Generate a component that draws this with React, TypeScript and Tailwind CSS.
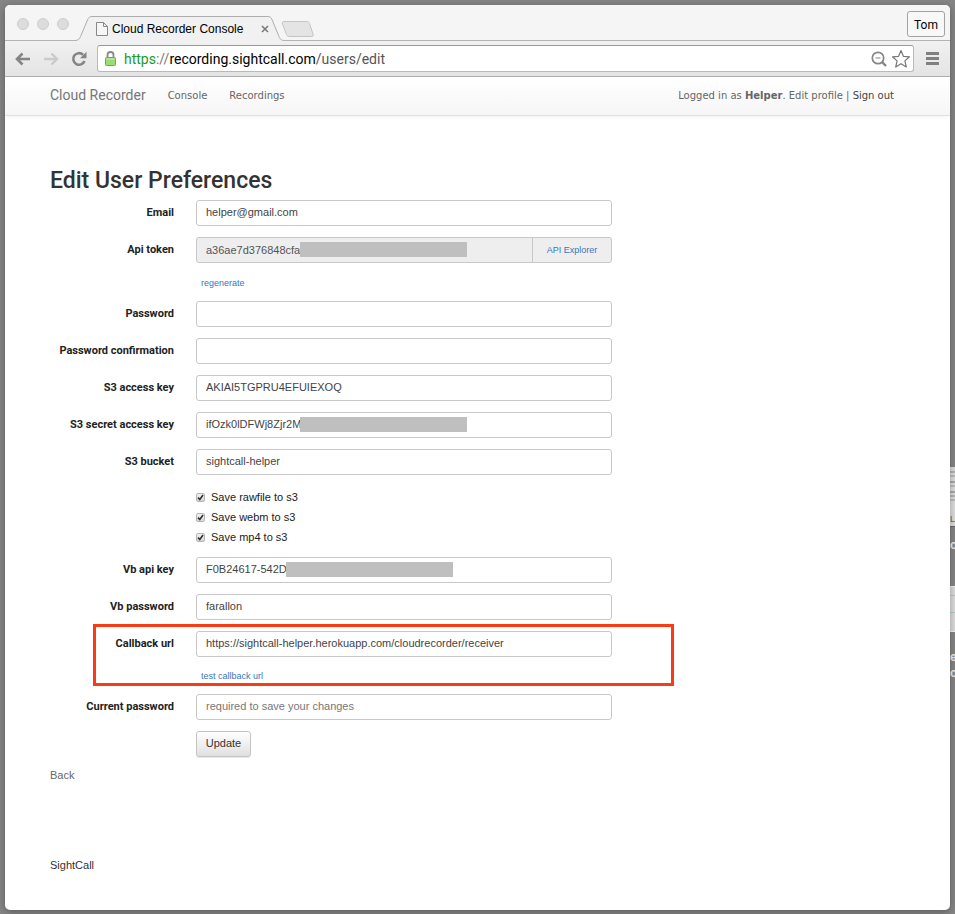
import type { ReactNode } from "react";

const field =
  "block h-[26px] w-full rounded-[3px] border border-[#c8c8c8] bg-white px-[9px] pb-[2px] text-[11px] text-[#444] outline-none placeholder:text-[#777]";

type RowProps = {
  id: string;
  label: string;
  type?: string;
  value?: string;
  placeholder?: string;
  mask?: ReactNode;
  children?: ReactNode;
};

function Row({ id, label, type = "text", value = "", placeholder, mask, children }: RowProps) {
  return (
    <div className="grid grid-cols-[124px_minmax(0,416px)] gap-x-[22px]">
      <label
        htmlFor={id}
        className="pt-[5px] text-right font-[Roboto,'Liberation_Sans',sans-serif] text-[11px] leading-4 font-bold whitespace-nowrap text-[#222]"
      >
        {label}
      </label>
      <div className="relative min-w-0">
        {children ?? <input id={id} type={type} defaultValue={value} placeholder={placeholder} className={field} />}
        {mask}
      </div>
    </div>
  );
}

function SmallLink({ children }: { children: ReactNode }) {
  return (
    <div className="pl-[151px] text-[9px] leading-3 text-[#3b76bd]">
      <a href="#">{children}</a>
    </div>
  );
}

function Check({ id, label }: { id: string; label: string }) {
  return (
    <div className="flex h-5 items-center gap-[6px] text-[11px] text-[#222]">
      <span className="relative block size-[9px]">
        <input
          id={id}
          type="checkbox"
          defaultChecked
          className="peer block size-[9px] appearance-none rounded-[2px] border border-[#b5b5b5] bg-linear-to-b from-[#f2f2f2] to-[#d8d8d8]"
        />
        <svg viewBox="0 0 9 9" className="pointer-events-none absolute inset-0 hidden size-[9px] peer-checked:block">
          <path d="M2 4.6 3.8 6.5 7 2" fill="none" stroke="#333" strokeWidth="1.6" />
        </svg>
      </span>
      <label htmlFor={id}>{label}</label>
    </div>
  );
}

function TitleBar() {
  return (
    <div className="relative flex h-9 items-end bg-[#f5f5f5] pr-[5px] pl-3">
      <div className="absolute inset-x-0 bottom-0 h-px bg-[#b3b3b3]" />
      <div className="flex gap-2 self-start pt-[13px]">
        <span className="size-3 rounded-full border border-[#cecece] bg-[#dcdcdc]" />
        <span className="size-3 rounded-full border border-[#cecece] bg-[#dcdcdc]" />
        <span className="size-3 rounded-full border border-[#cecece] bg-[#dcdcdc]" />
      </div>
      <div className="relative ml-1.5 flex h-[25px] w-[212px] items-center pr-[18px] pl-[21px]">
        <svg viewBox="0 0 212 25" className="absolute inset-0 h-[25px] w-[212px]">
          <path
            d="M0 24.500C3 24.500 4.500 23 5.500 20.500L12.500 4C13.500 1.500 14.500.5 17 .5H192C195 .5 196 1 197 3.500L204 20.500C205 23 206 24.500 210 24.500V25H0Z"
            fill="#f1f1f1"
          />
          <path
            d="M0 24.500C3 24.500 4.500 23 5.500 20.500L12.500 4C13.500 1.500 14.500.5 17 .5H192C195 .5 196 1 197 3.500L204 20.500C205 23 206 24.500 210 24.500"
            fill="none"
            stroke="#adadad"
          />
        </svg>
        <svg viewBox="0 0 12 14" className="relative h-[14px] w-3 shrink-0">
          <path d="M.5.5H7.500L11.500 4.500V13.500H.5ZM7.500.5V4.500H11.500" fill="#f6f6f6" stroke="#888" />
        </svg>
        <span className="relative ml-1 flex-1 text-[12px] whitespace-nowrap text-black">Cloud Recorder Console</span>
        <button type="button" aria-label="Close tab" className="relative block">
          <svg viewBox="0 0 8 8" className="size-2">
            <path d="M1 1 7 7M7 1 1 7" stroke="#777" strokeWidth="1.500" />
          </svg>
        </button>
      </div>
      <button type="button" aria-label="New tab" className="-ml-[6px] mb-1 block">
        <svg viewBox="0 0 33 16" className="h-4 w-[33px]">
          <path
            d="M3 .5H25C27 .5 28 1 28.500 2.500L32 13C32.500 15 32 15.500 30.500 15.500H9C7 15.500 6 15 5.500 13.500L1.500 3C1 1.500 1.500.5 3 .5Z"
            fill="#e4e4e4"
            stroke="#c4c4c4"
          />
        </svg>
      </button>
      <button
        type="button"
        className="mb-1 ml-auto h-[26px] w-[38px] rounded-[3px] border border-[#a3a3a3] bg-[#f8f8f8] pt-px font-[Roboto,sans-serif] text-[12px] leading-6 text-black"
      >
        Tom
      </button>
    </div>
  );
}

function Toolbar() {
  return (
    <div className="flex h-9 items-center border-b border-[#b0b0b0] bg-linear-to-b from-[#f1f1f1] to-[#e4e4e4] pr-[11px] pl-[10px]">
      <div className="flex gap-3">
        <button type="button" aria-label="Back">
          <svg viewBox="0 0 16 14" className="h-[14px] w-4">
            <path d="M15 7H2.500M7.500 1.500 2 7 7.500 12.500" fill="none" stroke="#858585" strokeWidth="2.600" />
          </svg>
        </button>
        <button type="button" aria-label="Forward">
          <svg viewBox="0 0 16 14" className="h-[14px] w-4">
            <path d="M1 7H13.500M8.500 1.500 14 7 8.500 12.500" fill="none" stroke="#cacaca" strokeWidth="2.400" />
          </svg>
        </button>
        <button type="button" aria-label="Reload">
          <svg viewBox="0 0 16 16" className="size-4">
            <path d="M12 3.700A5.800 5.800 0 1 0 13.500 10" fill="none" stroke="#858585" strokeWidth="2.600" />
            <path d="M15.500.8V7.200H9Z" fill="#858585" />
          </svg>
        </button>
      </div>
      <div className="ml-[10px] flex h-[27px] min-w-0 flex-1 items-center rounded-[3px] border border-[#b9b9b9] border-t-[#9a9a9a] bg-white pr-[2px] pl-[7px]">
        <svg viewBox="0 0 11 15" className="h-[15px] w-[11px] shrink-0">
          <path d="M2.500 7V4A3 3 0 0 1 8.500 4V7" fill="none" stroke="#888" strokeWidth="1.800" />
          <rect x=".5" y="6.500" width="10" height="8" rx="1" fill="#9bdb74" stroke="#6aaa48" />
          <path d="M1.500 8H9.500" stroke="#c9f0b4" />
        </svg>
        <div className="ml-2 flex-1 pt-px font-[Roboto,'Liberation_Sans',sans-serif] text-[14px] whitespace-nowrap text-[#777]">
          <span className="text-[#149c1c]">https</span>://
          <span className="text-black">recording.sightcall.com</span>
          <span className="text-[#555]">/users/edit</span>
        </div>
        <button type="button" aria-label="Zoom">
          <svg viewBox="0 0 16 16" className="size-4">
            <circle cx="7" cy="7" r="5.700" fill="none" stroke="#858585" strokeWidth="1.700" />
            <path d="M4.500 7H9.500" stroke="#858585" strokeWidth="1.200" />
            <path d="M11 11 15 15" stroke="#858585" strokeWidth="2.400" />
          </svg>
        </button>
        <button type="button" aria-label="Bookmark" className="ml-1">
          <svg viewBox="0 0 20 20" className="size-5">
            <path
              d="M10 1.500 12.400 7.300 18.500 7.800 13.900 11.900 15.300 18 10 14.700 4.700 18 6.100 11.900 1.500 7.800 7.600 7.300Z"
              fill="#fff"
              stroke="#777"
              strokeWidth="1.200"
              strokeLinejoin="round"
            />
          </svg>
        </button>
      </div>
      <button type="button" aria-label="Menu" className="ml-3 block">
        <svg viewBox="0 0 13 13" className="size-[13px]">
          <path d="M0 1.500H13M0 6.500H13M0 11.500H13" stroke="#808080" strokeWidth="3" />
        </svg>
      </button>
    </div>
  );
}

function DesktopIcons() {
  return (
    <div aria-hidden="true" className="absolute top-[467px] right-0 w-[5px] overflow-hidden">
      <div className="h-[60px] border-b border-[#666] bg-[#dedede] pt-1">
        <div className="space-y-[2px]">
          <div className="h-[2px] bg-[#b5b5b5]" />
          <div className="h-[2px] bg-[#bdbdbd]" />
          <div className="mt-1 h-[2px] bg-[#aaa]" />
          <div className="h-[2px] bg-[#bdbdbd]" />
          <div className="mt-1 h-[2px] bg-[#aaa]" />
          <div className="h-[2px] bg-[#b5b5b5]" />
          <div className="h-[2px] bg-[#bdbdbd]" />
        </div>
        <div className="mt-3 text-[9px] leading-3 text-[#666]">L</div>
      </div>
      <div className="mt-[10px] text-[12px] leading-4 font-bold text-[#eee]">oc</div>
      <div className="mt-[33px] h-[46px] border-y border-[#f4f4f4] bg-[#dcdcdc]">
        <div className="mt-2 h-px bg-[#a9cfc4]" />
        <div className="mt-4 h-px bg-[#b4c8c4]" />
      </div>
      <div className="mt-[17px] text-[12px] leading-4 font-bold text-[#eee]">
        e<br />o
      </div>
    </div>
  );
}

function Mask({ start }: { start: "near" | "far" }) {
  const place = start === "near" ? "left-[90px]" : "left-[104px]";
  return <div className={`absolute top-[5px] h-[15px] w-[167px] bg-[#bfbfbf] ${place}`} />;
}

export default function App() {
  return (
    <div className="relative flex min-h-screen flex-col overflow-hidden bg-[#858585] px-[5px] pt-[5px] pb-1 font-['Liberation_Sans',Arial,sans-serif]">
      <DesktopIcons />
      <div className="relative flex flex-1 flex-col overflow-hidden rounded-[5px] bg-white shadow-[0_2px_8px_rgba(0,0,0,0.3)]">
        <TitleBar />
        <Toolbar />
        <nav className="flex h-[39px] items-center border-b border-[#e0e0e0] bg-linear-to-b from-white to-[#f6f6f6] pr-14 pb-[2px] pl-[45px] font-['DejaVu_Sans',Verdana,sans-serif] text-[10px] whitespace-nowrap text-[#666] shadow-[0_1px_4px_rgba(0,0,0,0.06)]">
          <a href="#" className="font-[Roboto,'Liberation_Sans',sans-serif] text-[14px] text-[#777]">
            Cloud Recorder
          </a>
          <a href="#" className="ml-[22px]">
            Console
          </a>
          <a href="#" className="ml-[22px]">
            Recordings
          </a>
          <p className="ml-auto">
            Logged in as <b>Helper</b>. <a href="#">Edit profile</a> |{" "}
            <a href="#" className="text-[#444]">
              Sign out
            </a>
          </p>
        </nav>

        <main className="px-[45px] pt-[50px]">
          <h1 className="font-[Roboto,'Liberation_Sans',sans-serif] text-[23px] leading-[30px] font-medium text-[#333]">
            Edit User Preferences
          </h1>
          <form className="mt-1" onSubmit={(e) => e.preventDefault()}>
            <div className="space-y-[11px]">
              <Row id="email" label="Email" value="helper@gmail.com" />
              <Row id="token" label="Api token" mask={<Mask start="far" />}>
                <div className="flex h-[26px] rounded-[3px] border border-[#c8c8c8] bg-[#eee]">
                  <input
                    id="token"
                    readOnly
                    defaultValue="a36ae7d376848cfaa"
                    className="min-w-0 flex-1 bg-transparent px-[9px] text-[11px] text-[#555] outline-none"
                  />
                  <a href="#" className="w-[79px] border-l border-[#c8c8c8] text-center text-[9px] leading-6 text-[#3b76bd]">
                    API Explorer
                  </a>
                </div>
              </Row>
            </div>
            <div className="pt-[14px] pb-3">
              <SmallLink>regenerate</SmallLink>
            </div>
            <div className="space-y-[11px]">
              <Row id="password" label="Password" type="password" />
              <Row id="confirm" label="Password confirmation" type="password" />
              <Row id="s3key" label="S3 access key" value="AKIAI5TGPRU4EFUIEXOQ" />
              <Row id="s3secret" label="S3 secret access key" value="ifOzk0lDFWj8Zjr2Mc" mask={<Mask start="far" />} />
              <Row id="bucket" label="S3 bucket" value="sightcall-helper" />
            </div>
            <div className="pt-3 pb-[10px] pl-[146px]">
              <Check id="raw" label="Save rawfile to s3" />
              <Check id="webm" label="Save webm to s3" />
              <Check id="mp4" label="Save mp4 to s3" />
            </div>
            <div className="space-y-[11px]">
              <Row id="vbkey" label="Vb api key" value="F0B24617-542D-" mask={<Mask start="near" />} />
              <Row id="vbpass" label="Vb password" value="farallon" />
              <div className="relative">
                <div className="pointer-events-none absolute -top-[7px] -bottom-[3px] left-[43px] w-[581px] border-[3px] border-[#f93c16]" />
                <Row
                  id="callback"
                  label="Callback url"
                  value="https://sightcall-helper.herokuapp.com/cloudrecorder/receiver"
                />
                <div className="pt-[13px] pb-px">
                  <SmallLink>test callback url</SmallLink>
                </div>
              </div>
              <Row id="current" label="Current password" type="password" placeholder="required to save your changes" />
            </div>
            <button
              type="submit"
              className="mt-[11px] ml-[146px] block h-[26px] w-[55px] rounded-[3px] border border-[#c4c4c4] bg-linear-to-b from-white to-[#e0e0e0] pb-[2px] text-[11px] text-[#333] shadow-[0_1px_1px_rgba(0,0,0,0.1)]"
            >
              Update
            </button>
          </form>
          <a href="#" className="mt-[10px] block w-fit text-[11px] leading-4 text-[#666]">
            Back
          </a>
          <footer className="pt-[74px] text-[11px] leading-4 text-[#333]">SightCall</footer>
        </main>
      </div>
    </div>
  );
}
